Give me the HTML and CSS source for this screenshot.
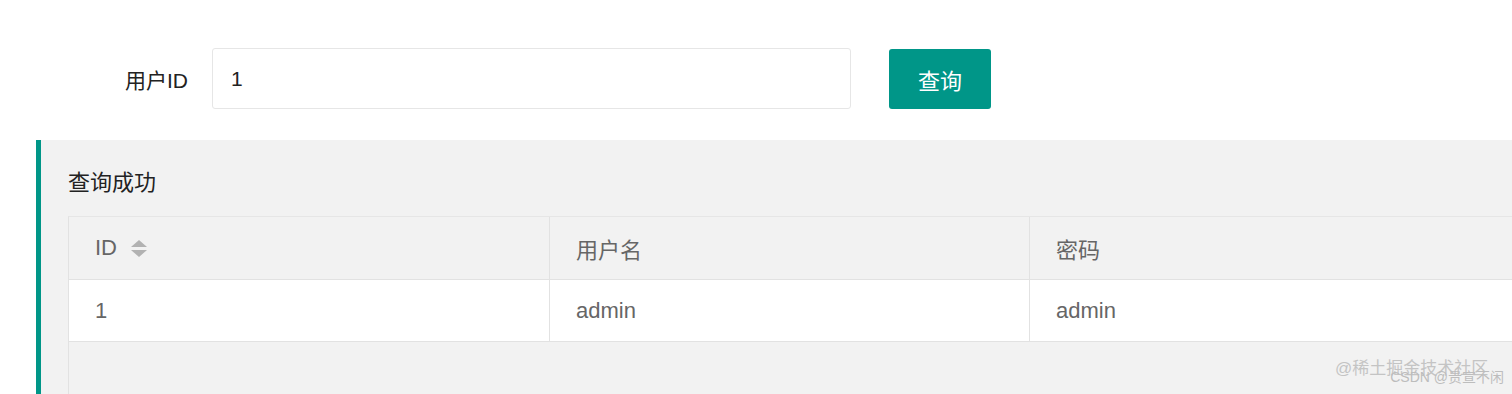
FILE: index.html
```html
<!DOCTYPE html>
<html lang="zh-CN">
<head>
<meta charset="utf-8">
<title>查询</title>
<link rel="stylesheet" href="styles.css">
</head>
<body>
<form class="search-form">
  <label class="form-label" for="uid">用户ID</label>
  <input class="form-input" id="uid" type="text" value="1">
  <button class="btn" type="button">查询</button>
</form>
<div class="quote">
  <div class="quote-title">查询成功</div>
  <div class="table-box">
    <div class="t-row t-head">
      <div class="t-cell c1">ID <span class="sort"><i class="sort-up"></i><i class="sort-down"></i></span></div>
      <div class="t-cell c2">用户名</div>
      <div class="t-cell c3">密码</div>
    </div>
    <div class="t-row t-body">
      <div class="t-cell c1">1</div>
      <div class="t-cell c2">admin</div>
      <div class="t-cell c3">admin</div>
    </div>
  </div>
  <div class="watermark">
    <span class="wm1">@稀土掘金技术社区</span>
    <span class="wm2">CSDN @贵宣不闲</span>
  </div>
</div>
</body>
</html>
```

FILE: styles.css
```css
html, body {
  margin: 0;
  padding: 0;
  background: #fff;
  overflow: hidden;
}
body {
  font-family: "Liberation Sans", "Noto Sans CJK SC", sans-serif;
  font-size: 22px;
  color: #333;
  width: 1512px;
  height: 394px;
}
.search-form {
  display: flex;
  align-items: center;
  padding-top: 48px;
  margin: 0;
}
.form-label {
  width: 212px;
  text-align: right;
  padding-right: 24px;
  box-sizing: border-box;
  color: #222;
  font-size: 21px;
}
.form-input {
  width: 639px;
  height: 61px;
  box-sizing: border-box;
  border: 1px solid #e6e6e6;
  border-radius: 3px;
  padding: 0 18px;
  font-family: inherit;
  font-size: 21px;
  color: #222;
  outline: none;
}
.btn {
  margin-left: 38px;
  width: 102px;
  height: 60px;
  border: none;
  border-radius: 3px;
  background: #009688;
  color: #fff;
  font-family: inherit;
  font-size: 22px;
  padding: 0;
}
.quote {
  position: relative;
  margin-top: 31px;
  margin-left: 36px;
  border-left: 5px solid #009688;
  background: #f2f2f2;
  padding: 27px 0 0 27px;
  height: 400px;
  box-sizing: border-box;
}
.quote-title {
  font-size: 22px;
  line-height: 32px;
  color: #222;
  margin-bottom: 17px;
}
.table-box {
  border-left: 1px solid #e2e2e2;
  border-top: 1px solid #e6e6e6;
  height: 300px;
  width: 1500px;
}
.t-row {
  display: flex;
  border-bottom: 1px solid #e2e2e2;
}
.t-head {
  height: 62px;
  background: #f2f2f2;
}
.t-body {
  height: 61px;
  background: #fff;
}
.t-cell {
  display: flex;
  align-items: center;
  padding-left: 26px;
  box-sizing: border-box;
  color: #666;
  font-size: 22px;
}
.c1 { width: 481px; border-right: 1px solid #e2e2e2; }
.c2 { width: 480px; border-right: 1px solid #e2e2e2; }
.c3 { flex: 1; }
.sort {
  display: inline-flex;
  flex-direction: column;
  gap: 3px;
  margin-left: 14px;
}
.sort-up, .sort-down {
  display: block;
  width: 0;
  height: 0;
  border-left: 8px solid transparent;
  border-right: 8px solid transparent;
}
.sort-up { border-bottom: 7px solid #b2b2b2; }
.sort-down { border-top: 7px solid #b2b2b2; }
.watermark {
  position: absolute;
  right: 12px;
  top: 214px;
  width: 165px;
  height: 40px;
}
.wm1 {
  position: absolute;
  left: 0;
  top: 0;
  font-size: 17px;
  color: #c4c4c4;
  white-space: nowrap;
}
.wm2 {
  position: absolute;
  right: -4px;
  top: 12px;
  font-size: 14px;
  color: #bdbdbd;
  white-space: nowrap;
}
```
